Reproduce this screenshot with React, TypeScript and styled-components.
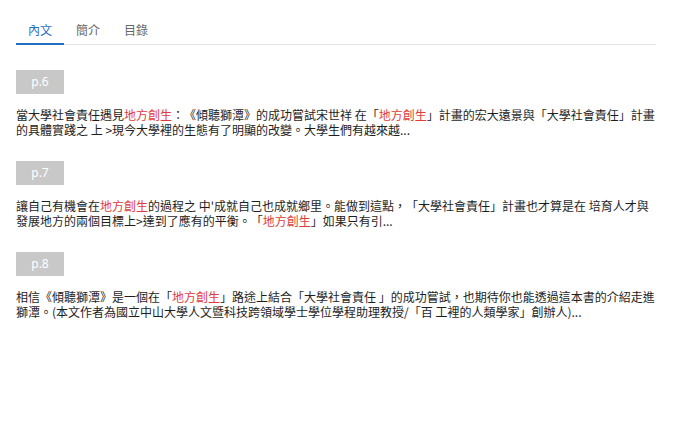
import React, { useState } from 'react';
import styled, { createGlobalStyle } from 'styled-components';

const GlobalStyle = createGlobalStyle`
  body {
    margin: 0;
    background: #fff;
    font-family: "Noto Sans CJK TC", "Noto Sans", sans-serif;
  }
`;

const Page = styled.div`
  width: 640px;
  padding: 17px 20px 0 16px;
`;

const TabBar = styled.div`
  display: flex;
  border-bottom: 1px solid #e4e4e4;
`;

const Tab = styled.button<{ $active?: boolean }>`
  width: 48px;
  height: 28px;
  padding: 0 0 2px;
  margin: 0 0 -1px;
  border: none;
  border-bottom: 2px solid ${(p) => (p.$active ? '#1f6fc5' : 'transparent')};
  background: none;
  font-family: inherit;
  font-size: 12px;
  color: ${(p) => (p.$active ? '#1f6fc5' : '#666')};
  cursor: pointer;
`;

const Section = styled.div`
  margin-top: 25px;

  & + & {
    margin-top: 24px;
  }
`;

const PageBadge = styled.div`
  width: 48px;
  height: 24px;
  background: #c8c8c8;
  color: #fff;
  font-family: "Noto Sans", sans-serif;
  font-size: 12px;
  line-height: 24px;
  text-align: center;
`;

const Excerpt = styled.p`
  margin: 14px 0 0;
  font-size: 12px;
  line-height: 14.5px;
  color: #1e1e1e;
  text-spacing-trim: space-all;
  font-feature-settings: "chws" 0, "halt" 0, "palt" 0;
`;

const Hl = styled.span`
  color: #e03c3c;
`;

type Item = { page: string; text: React.ReactNode };

const items: Item[] = [
  {
    page: 'p.6',
    text: (
      <>
        當大學社會責任遇見<Hl>地方創生</Hl>：《傾聽獅潭》的成功嘗試宋世祥 在「<Hl>地方創生</Hl>」計畫的宏大遠景與「大學社會責任」計畫的具體實踐之 上 &gt;現今大學裡的生態有了明顯的改變。大學生們有越來越...
      </>
    ),
  },
  {
    page: 'p.7',
    text: (
      <>
        讓自己有機會在<Hl>地方創生</Hl>的過程之 中'成就自己也成就鄉里。能做到這點，「大學社會責任」計畫也才算是在 培育人才與發展地方的兩個目標上&gt;達到了應有的平衡。「<Hl>地方創生</Hl>」如果只有引...
      </>
    ),
  },
  {
    page: 'p.8',
    text: (
      <>
        相信《傾聽獅潭》是一個在「<Hl>地方創生</Hl>」路途上結合「大學社會責任 」的成功嘗試，也期待你也能透過這本書的介紹走進獅潭。(本文作者為國立中山大學人文暨科技跨領域學士學位學程助理教授/「百 工裡的人類學家」創辦人)...
      </>
    ),
  },
];

const tabs = ['內文', '簡介', '目錄'];

export default function App() {
  const [active, setActive] = useState(0);

  return (
    <Page>
      <GlobalStyle />
      <TabBar>
        {tabs.map((label, i) => (
          <Tab key={label} $active={i === active} onClick={() => setActive(i)}>
            {label}
          </Tab>
        ))}
      </TabBar>
      {items.map((item) => (
        <Section key={item.page}>
          <PageBadge>{item.page}</PageBadge>
          <Excerpt>{item.text}</Excerpt>
        </Section>
      ))}
    </Page>
  );
}
